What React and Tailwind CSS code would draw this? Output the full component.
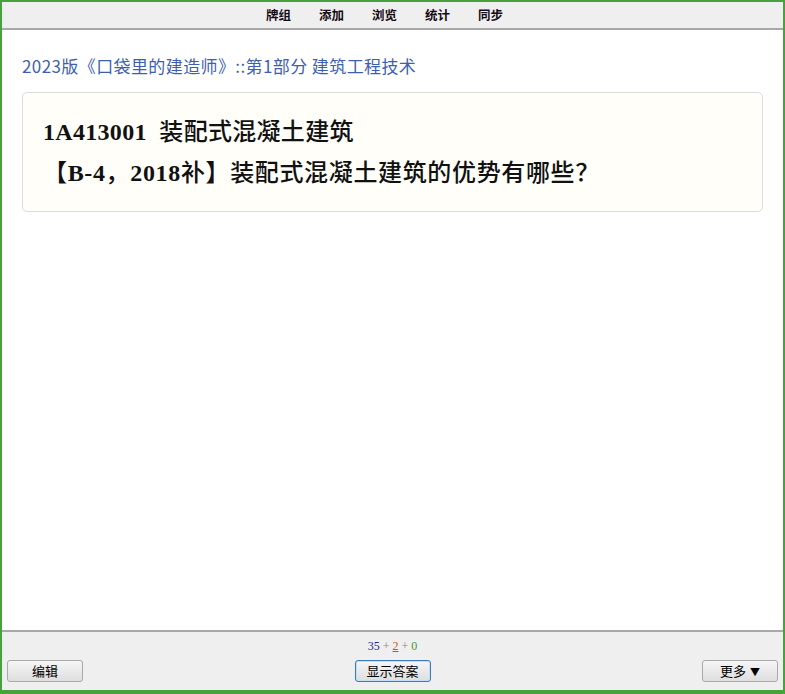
export default function App() {
  const btn =
    "h-[22px] w-[76px] flex items-center justify-center rounded-[3px] border text-[13px] text-black bg-gradient-to-b from-[#f6f6f6] to-[#dedede]";
  return (
    <div
      className="h-[694px] w-[785px] flex flex-col border-2 border-b-4 border-[#47a23d] bg-white overflow-hidden"
      style={{ fontFamily: '"Noto Sans CJK SC", "Liberation Sans", sans-serif' }}
    >
      {/* top bar */}
      <div className="h-[28px] shrink-0 bg-[#efefef] border-b-2 border-[#a8a8a8] flex items-center justify-center gap-[28px] pr-[16px]">
        {["牌组", "添加", "浏览", "统计", "同步"].map((t) => (
          <span key={t} className="text-[12.5px] font-bold text-[#150a15] leading-none">
            {t}
          </span>
        ))}
      </div>

      {/* content */}
      <div className="flex-1 px-[20px] pt-[26px]">
        <div className="text-[17px] leading-[20px] text-[#3e5fae] tracking-[0.4px]">
          2023版《口袋里的建造师》::第1部分 建筑工程技术
        </div>
        <div
          className="mt-[16px] h-[120px] rounded-[5px] border border-[#dcdcdc] bg-[#fffef9] pl-[20px] pt-[19px] text-[#111]"
          style={{ fontFamily: '"Liberation Serif", "Noto Sans CJK SC", serif' }}
        >
          <div className="text-[24px] leading-[41px] font-medium tracking-[0.3px]">
            <span className="font-bold">1A413001</span>&nbsp; 装配式混凝土建筑
          </div>
          <div className="text-[24px] leading-[41px] font-medium tracking-[0.65px]">
            【<span className="font-bold">B-4</span>，<span className="font-bold">2018</span>补】装配式混凝土建筑的优势有哪些？
          </div>
        </div>
      </div>

      {/* bottom bar */}
      <div className="h-[60px] shrink-0 bg-[#efefef] border-t-2 border-[#a8a8a8] relative">
        <div className="absolute top-[7px] left-0 right-0 text-center text-[12px] leading-[14px]" style={{ fontFamily: '"Liberation Serif", serif' }}>
          <span className="text-[#262699]">35</span>
          <span className="text-[#888]"> + </span>
          <span className="text-[#c4562a] underline">2</span>
          <span className="text-[#888]"> + </span>
          <span className="text-[#3c9a3c]">0</span>
        </div>
        <div className="absolute top-[28px] left-[5px] right-[5px] flex items-center justify-between">
          <button className={btn + " border-[#a9a9a9]"}>编辑</button>
          <button className={btn + " border-[#3d7ab8] shadow-[inset_0_0_0_1px_#bfe0f8]"}>显示答案</button>
          <button className={btn + " border-[#a9a9a9] gap-[4px]"}>
            <span>更多</span>
            <span className="text-[10px]">▼</span>
          </button>
        </div>
      </div>
    </div>
  );
}
